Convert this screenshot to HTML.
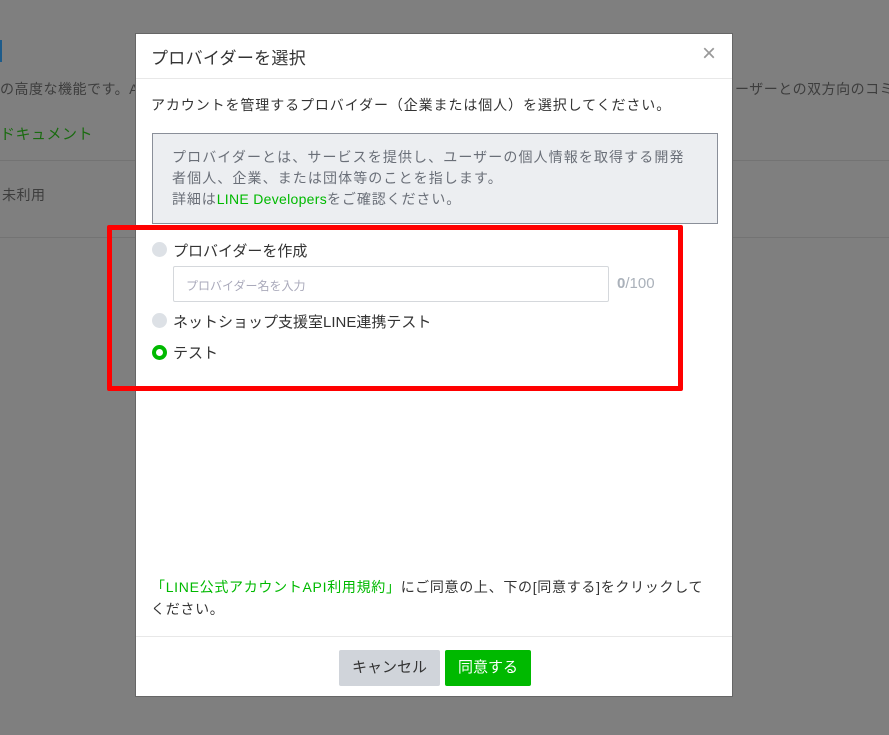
<!DOCTYPE html>
<html><head><meta charset="utf-8"><style>
*{margin:0;padding:0;box-sizing:border-box}
body{width:889px;height:735px;background:#7f7f7f;position:relative;overflow:hidden;font-family:"Liberation Sans","Noto Sans CJK JP",sans-serif;color:#333}
.a{position:absolute;white-space:nowrap}
.bg{color:#3d3d3d;font-size:14px;letter-spacing:0.5px}
.hl{position:absolute;left:0;width:889px;height:1px;background:#737373}
.m{position:absolute;left:135px;top:33px;width:598px;height:664px;background:#fff;border:1px solid #666}
</style></head><body>
<div class="a" style="left:0;top:40px;width:2px;height:22px;background:#1d5b8a"></div>
<div class="a bg" style="left:0;top:79px">の高度な機能です。A</div>
<div class="a bg" style="left:735px;top:79px">ーザーとの双方向のコミ</div>
<div class="a bg" style="left:0;top:123px;color:#1a6b10;font-size:15px">ドキュメント</div>
<div class="hl" style="top:160px"></div>
<div class="a bg" style="left:2px;top:185px">未利用</div>
<div class="hl" style="top:237px"></div>
<div class="m">
 <div class="a" style="left:15px;top:10px;font-size:17px;color:#333;letter-spacing:0.3px">プロバイダーを選択</div>
 <div class="a" style="left:566px;top:6px;font-size:24px;color:#999;font-weight:300">×</div>
 <div class="a" style="left:0;top:44px;width:596px;height:1px;background:#e8e8e8"></div>
 <div class="a" style="left:15px;top:61px;font-size:14px;letter-spacing:0.9px">アカウントを管理するプロバイダー（企業または個人）を選択してください。</div>
 <div class="a" style="left:16px;top:99px;width:566px;height:91px;background:#eceef1;border:1px solid #8a8f99"></div>
 <div class="a" style="left:36px;top:113px;font-size:14px;line-height:21px;color:#6a6f78;letter-spacing:1.1px">プロバイダーとは、サービスを提供し、ユーザーの個人情報を取得する開発<br>者個人、企業、または団体等のことを指します。<br><span style="letter-spacing:0.9px">詳細は<span style="color:#00b900;letter-spacing:0.3px">LINE Developers</span>をご確認ください。</span></div>
 <div class="a" style="left:16px;top:208px;width:15px;height:15px;border-radius:50%;background:#dde1e6"></div>
 <div class="a" style="left:37px;top:206px;font-size:15px">プロバイダーを作成</div>
 <div class="a" style="left:37px;top:232px;width:436px;height:36px;border:1px solid #d5d8dc;border-radius:2px"></div>
 <div class="a" style="left:50px;top:243px;font-size:12px;color:#aab">プロバイダー名を入力</div>
 <div class="a" style="left:481px;top:241px;font-size:15px;color:#aab1ba"><b>0</b>/100</div>
 <div class="a" style="left:16px;top:279px;width:15px;height:15px;border-radius:50%;background:#dde1e6"></div>
 <div class="a" style="left:37px;top:277px;font-size:15px">ネットショップ支援室LINE連携テスト</div>
 <div class="a" style="left:16px;top:311px;width:15px;height:15px;border-radius:50%;border:4px solid #00b900;background:#fff"></div>
 <div class="a" style="left:37px;top:308px;font-size:15px">テスト</div>
 <div class="a" style="left:15px;top:542px;font-size:14px;line-height:22px;letter-spacing:0.7px"><span style="color:#00b900">「LINE公式アカウントAPI利用規約」</span>にご同意の上、下の[同意する]をクリックして<br>ください。</div>
 <div class="a" style="left:0;top:602px;width:596px;height:1px;background:#e8e8e8"></div>
 <div class="a" style="left:203px;top:616px;width:101px;height:36px;background:#d0d4da;border-radius:2px;font-size:15px;line-height:36px;text-align:center">キャンセル</div>
 <div class="a" style="left:309px;top:616px;width:86px;height:36px;background:#00b900;border-radius:2px;font-size:15px;line-height:36px;text-align:center;color:#fff">同意する</div>
</div>
<div class="a" style="left:107px;top:225px;width:576px;height:166px;border:5px solid #ff0000;border-radius:2px"></div>
</body></html>
